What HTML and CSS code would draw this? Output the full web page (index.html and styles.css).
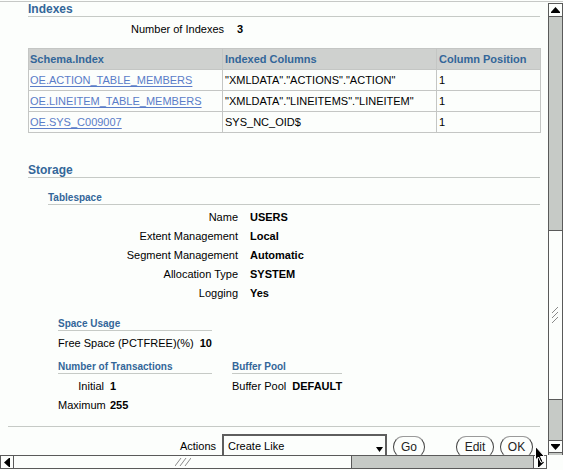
FILE: index.html
```html
<!DOCTYPE html>
<html>
<head>
<meta charset="utf-8">
<link rel="stylesheet" href="styles.css">
</head>
<body>
<div class="window">
  <div class="main">
    <div class="viewport">
      <section class="indexes">
        <h2 class="hdr">Indexes</h2>
        <div class="kv kv-idx"><span class="k">Number of Indexes</span><span class="v">3</span></div>
        <table class="grid">
          <colgroup><col class="c1"><col class="c2"><col class="c3"></colgroup>
          <thead>
            <tr><th>Schema.Index</th><th>Indexed Columns</th><th>Column Position</th></tr>
          </thead>
          <tbody>
            <tr><td><a href="#">OE.ACTION_TABLE_MEMBERS</a></td><td>"XMLDATA"."ACTIONS"."ACTION"</td><td>1</td></tr>
            <tr><td><a href="#">OE.LINEITEM_TABLE_MEMBERS</a></td><td>"XMLDATA"."LINEITEMS"."LINEITEM"</td><td>1</td></tr>
            <tr><td><a href="#">OE.SYS_C009007</a></td><td>SYS_NC_OID$</td><td>1</td></tr>
          </tbody>
        </table>
      </section>

      <section class="storage">
        <h2 class="hdr">Storage</h2>
        <div class="ts">
          <h3 class="subhdr ts-hdr">Tablespace</h3>
          <div class="kvlist">
            <div class="kv ts-row"><span class="k">Name</span><span class="v">USERS</span></div>
            <div class="kv ts-row"><span class="k">Extent Management</span><span class="v">Local</span></div>
            <div class="kv ts-row"><span class="k">Segment Management</span><span class="v">Automatic</span></div>
            <div class="kv ts-row"><span class="k">Allocation Type</span><span class="v">SYSTEM</span></div>
            <div class="kv ts-row"><span class="k">Logging</span><span class="v">Yes</span></div>
          </div>
        </div>

        <div class="boxes">
          <div class="box su">
            <h3 class="subhdr">Space Usage</h3>
            <div class="kv small"><span class="k">Free Space (PCTFREE)(%)</span><span class="v">10</span></div>
          </div>
          <div class="pair">
            <div class="box tx">
              <h3 class="subhdr">Number of Transactions</h3>
              <div class="kv small"><span class="k k48">Initial</span><span class="v">1</span></div>
              <div class="kv small"><span class="k k48">Maximum</span><span class="v">255</span></div>
            </div>
            <div class="box bp">
              <h3 class="subhdr">Buffer Pool</h3>
              <div class="kv small"><span class="k">Buffer Pool</span><span class="v">DEFAULT</span></div>
            </div>
          </div>
        </div>
      </section>

      <div class="footer">
        <div class="actions">
          <span class="act-label">Actions</span>
          <div class="select"><span class="sel-text">Create Like</span><span class="sel-arrow"><svg width="7" height="5" viewBox="0 0 7 5"><polygon points="0,0 7,0 3.5,5" fill="#000"/></svg></span></div>
          <button class="btn go">Go</button>
          <button class="btn edit">Edit</button>
          <button class="btn ok">OK</button>
        </div>
      </div>
    </div>

    <div class="vscroll">
      <div class="sbtn vup"><svg width="9" height="7" viewBox="0 0 9 7"><polygon points="4.5,0 9,5 0,5" fill="#000"/><rect x="0" y="5" width="9" height="1" fill="#000"/></svg></div>
      <div class="vthumb"><svg width="9" height="16" viewBox="0 0 9 16"><g stroke="#8a8a8a" stroke-width="1"><line x1="1" y1="6" x2="7" y2="0"/><line x1="1" y1="11" x2="7" y2="5"/><line x1="1" y1="16" x2="7" y2="10"/></g></svg></div>
      <div class="vrest"></div>
      <div class="sbtn vdown"><svg width="9" height="7" viewBox="0 0 9 7"><rect x="0" y="1" width="9" height="1" fill="#000"/><polygon points="0,2 9,2 4.5,7" fill="#000"/></svg></div>
    </div>
  </div>

  <div class="hrow">
    <div class="hscroll">
      <div class="sbtn hleft"><svg width="7" height="9" viewBox="0 0 7 9"><polygon points="0,4.5 5,0 5,9" fill="#000"/><rect x="5" y="0" width="1" height="9" fill="#000"/></svg></div>
      <div class="hthumb"><svg width="16" height="8" viewBox="0 0 16 8"><g stroke="#8a8a8a" stroke-width="1"><line x1="0" y1="8" x2="6" y2="0"/><line x1="5" y1="8" x2="11" y2="0"/><line x1="10" y1="8" x2="16" y2="0"/></g></svg></div>
      <div class="hrest"></div>
      <div class="sbtn hright"><svg width="7" height="9" viewBox="0 0 7 9"><rect x="1" y="0" width="1" height="9" fill="#000"/><polygon points="2,0 7,4.5 2,9" fill="#000"/></svg></div>
    </div>
    <div class="corner"></div>
  </div>

  <svg class="cursor" width="11" height="18" viewBox="0 0 11 18"><polygon points="0.5,0.5 0.5,14 3.5,11 6,16.5 8,15.5 5.5,10.5 9.5,10.5" fill="#000" stroke="#fff" stroke-width="1"/></svg>
</div>
</body>
</html>
```

FILE: styles.css
```css
* { box-sizing: border-box; }
html, body { margin: 0; padding: 0; }
body {
  background: #fcfefc;
  font-family: "Liberation Sans", Arial, sans-serif;
  font-size: 11px;
  color: #000;
  width: 563px;
  height: 470px;
  overflow: hidden;
}
.window { padding-top: 1px; position: relative; height: 470px; }
.main { display: flex; border-top: 1px solid #c6c8c6; height: 454px; }
.viewport { width: 547px; height: 453px; overflow: hidden; }

.hdr {
  margin: 0 0 0 28px;
  width: 512px;
  font-size: 12px;
  font-weight: bold;
  color: #336699;
  line-height: 14px;
  border-bottom: 1px solid #c6cac6;
}
.subhdr {
  margin: 0;
  font-size: 10px;
  font-weight: bold;
  color: #336699;
  line-height: 12px;
  border-bottom: 1px solid #c6cac6;
}

.kv { display: flex; }
.kv .v { font-weight: bold; }
.kv-idx { margin: 6px 0 0 28px; line-height: 13px; }
.kv-idx .k { width: 196px; text-align: right; }
.kv-idx .v { margin-left: 13px; }

.grid {
  margin: 12px 0 0 28px;
  width: 512px;
  border-collapse: collapse;
  table-layout: fixed;
}
.grid .c1 { width: 194px; }
.grid .c2 { width: 214px; }
.grid .c3 { width: 104px; }
.grid th, .grid td {
  border: 1px solid #c4c6c4;
  padding: 4px 2px 3px 1px;
  line-height: 13px;
  text-align: left;
  font-size: 11px;
  white-space: nowrap;
  overflow: hidden;
}
.grid th { background: #cfd1cf; color: #336699; font-weight: bold; }
.grid td { background: #fcfefc; }
.grid td + td, .grid th + th { padding-left: 2px; }
.grid a { color: #5a7cc8; text-decoration: underline; text-underline-offset: 2px; }

.storage { margin-top: 30px; }
.ts { margin: 14px 0 0 48px; width: 492px; }
.kvlist { margin-top: 3px; }
.ts-row { line-height: 19px; }
.ts-row .k { width: 190px; text-align: right; }
.ts-row .v { margin-left: 12px; }

.boxes { margin: 15px 0 0 58px; }
.box.su, .box.tx { width: 154px; }
.box.bp { width: 110px; }
.box .subhdr { margin-bottom: 3px; }
.small { line-height: 19px; white-space: nowrap; }
.small .v { margin-left: 6px; }
.k48 { width: 46px; text-align: right; }
.pair { display: flex; gap: 20px; margin-top: 8px; }

.footer { margin: 11px 0 0 8px; width: 532px; border-top: 1px solid #c6cac6; }
.actions { display: flex; align-items: flex-start; margin-top: 7px; }
.act-label { width: 208px; text-align: right; line-height: 13px; margin-top: 6px; }
.select {
  margin-left: 6px;
  width: 165px;
  height: 24px;
  border: 2px solid #5e5e5e;
  border-bottom: none;
  background: #fcfefc;
  display: flex;
  align-items: flex-start;
  justify-content: space-between;
}
.sel-text { padding: 4px 0 0 4px; line-height: 13px; }
.sel-arrow { padding: 6px 2px 0 0; }
.btn {
  margin: 2px 0 0 6px;
  height: 22px;
  padding: 0;
  font-family: "Liberation Sans", Arial, sans-serif;
  font-size: 12px;
  color: #222;
  background: #fcfefc;
  border: 1px solid #9a9a9a;
  border-left-color: #404040;
  border-right-color: #404040;
  border-radius: 10px / 11px;
  line-height: 18px;
  text-align: center;
}
.btn.go { width: 32px; }
.btn.edit { width: 38px; margin-left: 31px; }
.btn.ok { width: 33px; }

.vscroll {
  width: 15px;
  margin: 1px 0 0 1px;
  height: 452px;
  background: #c6cac6;
  border-left: 1px solid #5a5a5a;
  border-right: 1px solid #5a5a5a;
  display: flex;
  flex-direction: column;
}
.sbtn {
  background: #fcfefc;
  display: flex;
  align-items: center;
  justify-content: center;
}
.vup { height: 14px; border-top: 1px solid #5a5a5a; border-bottom: 1px solid #5a5a5a; }
.vthumb {
  margin-top: 213px;
  height: 170px;
  background: #fcfefc;
  border-top: 1px solid #5a5a5a;
  border-bottom: 1px solid #5a5a5a;
  display: flex;
  align-items: center;
  justify-content: center;
}
.vrest { flex: 1; }
.vdown { height: 13px; margin-bottom: 2px; border-top: 1px solid #5a5a5a; border-bottom: 1px solid #5a5a5a; }

.hrow { display: flex; height: 15px; }
.hscroll {
  width: 547px;
  height: 14px;
  display: flex;
  background: #c6cac6;
  border-top: 1px solid #5a5a5a;
  border-bottom: 1px solid #5a5a5a;
}
.hleft { width: 14px; border-left: 1px solid #5a5a5a; border-right: 1px solid #5a5a5a; }
.hthumb {
  width: 338px;
  background: #fcfefc;
  border-right: 1px solid #5a5a5a;
  display: flex;
  align-items: center;
  justify-content: center;
}
.hrest { flex: 1; }
.hright { width: 14px; border-left: 1px solid #5a5a5a; border-right: 1px solid #5a5a5a; }
.corner { flex: 1; }

.cursor { position: absolute; left: 535px; top: 446px; }
```
